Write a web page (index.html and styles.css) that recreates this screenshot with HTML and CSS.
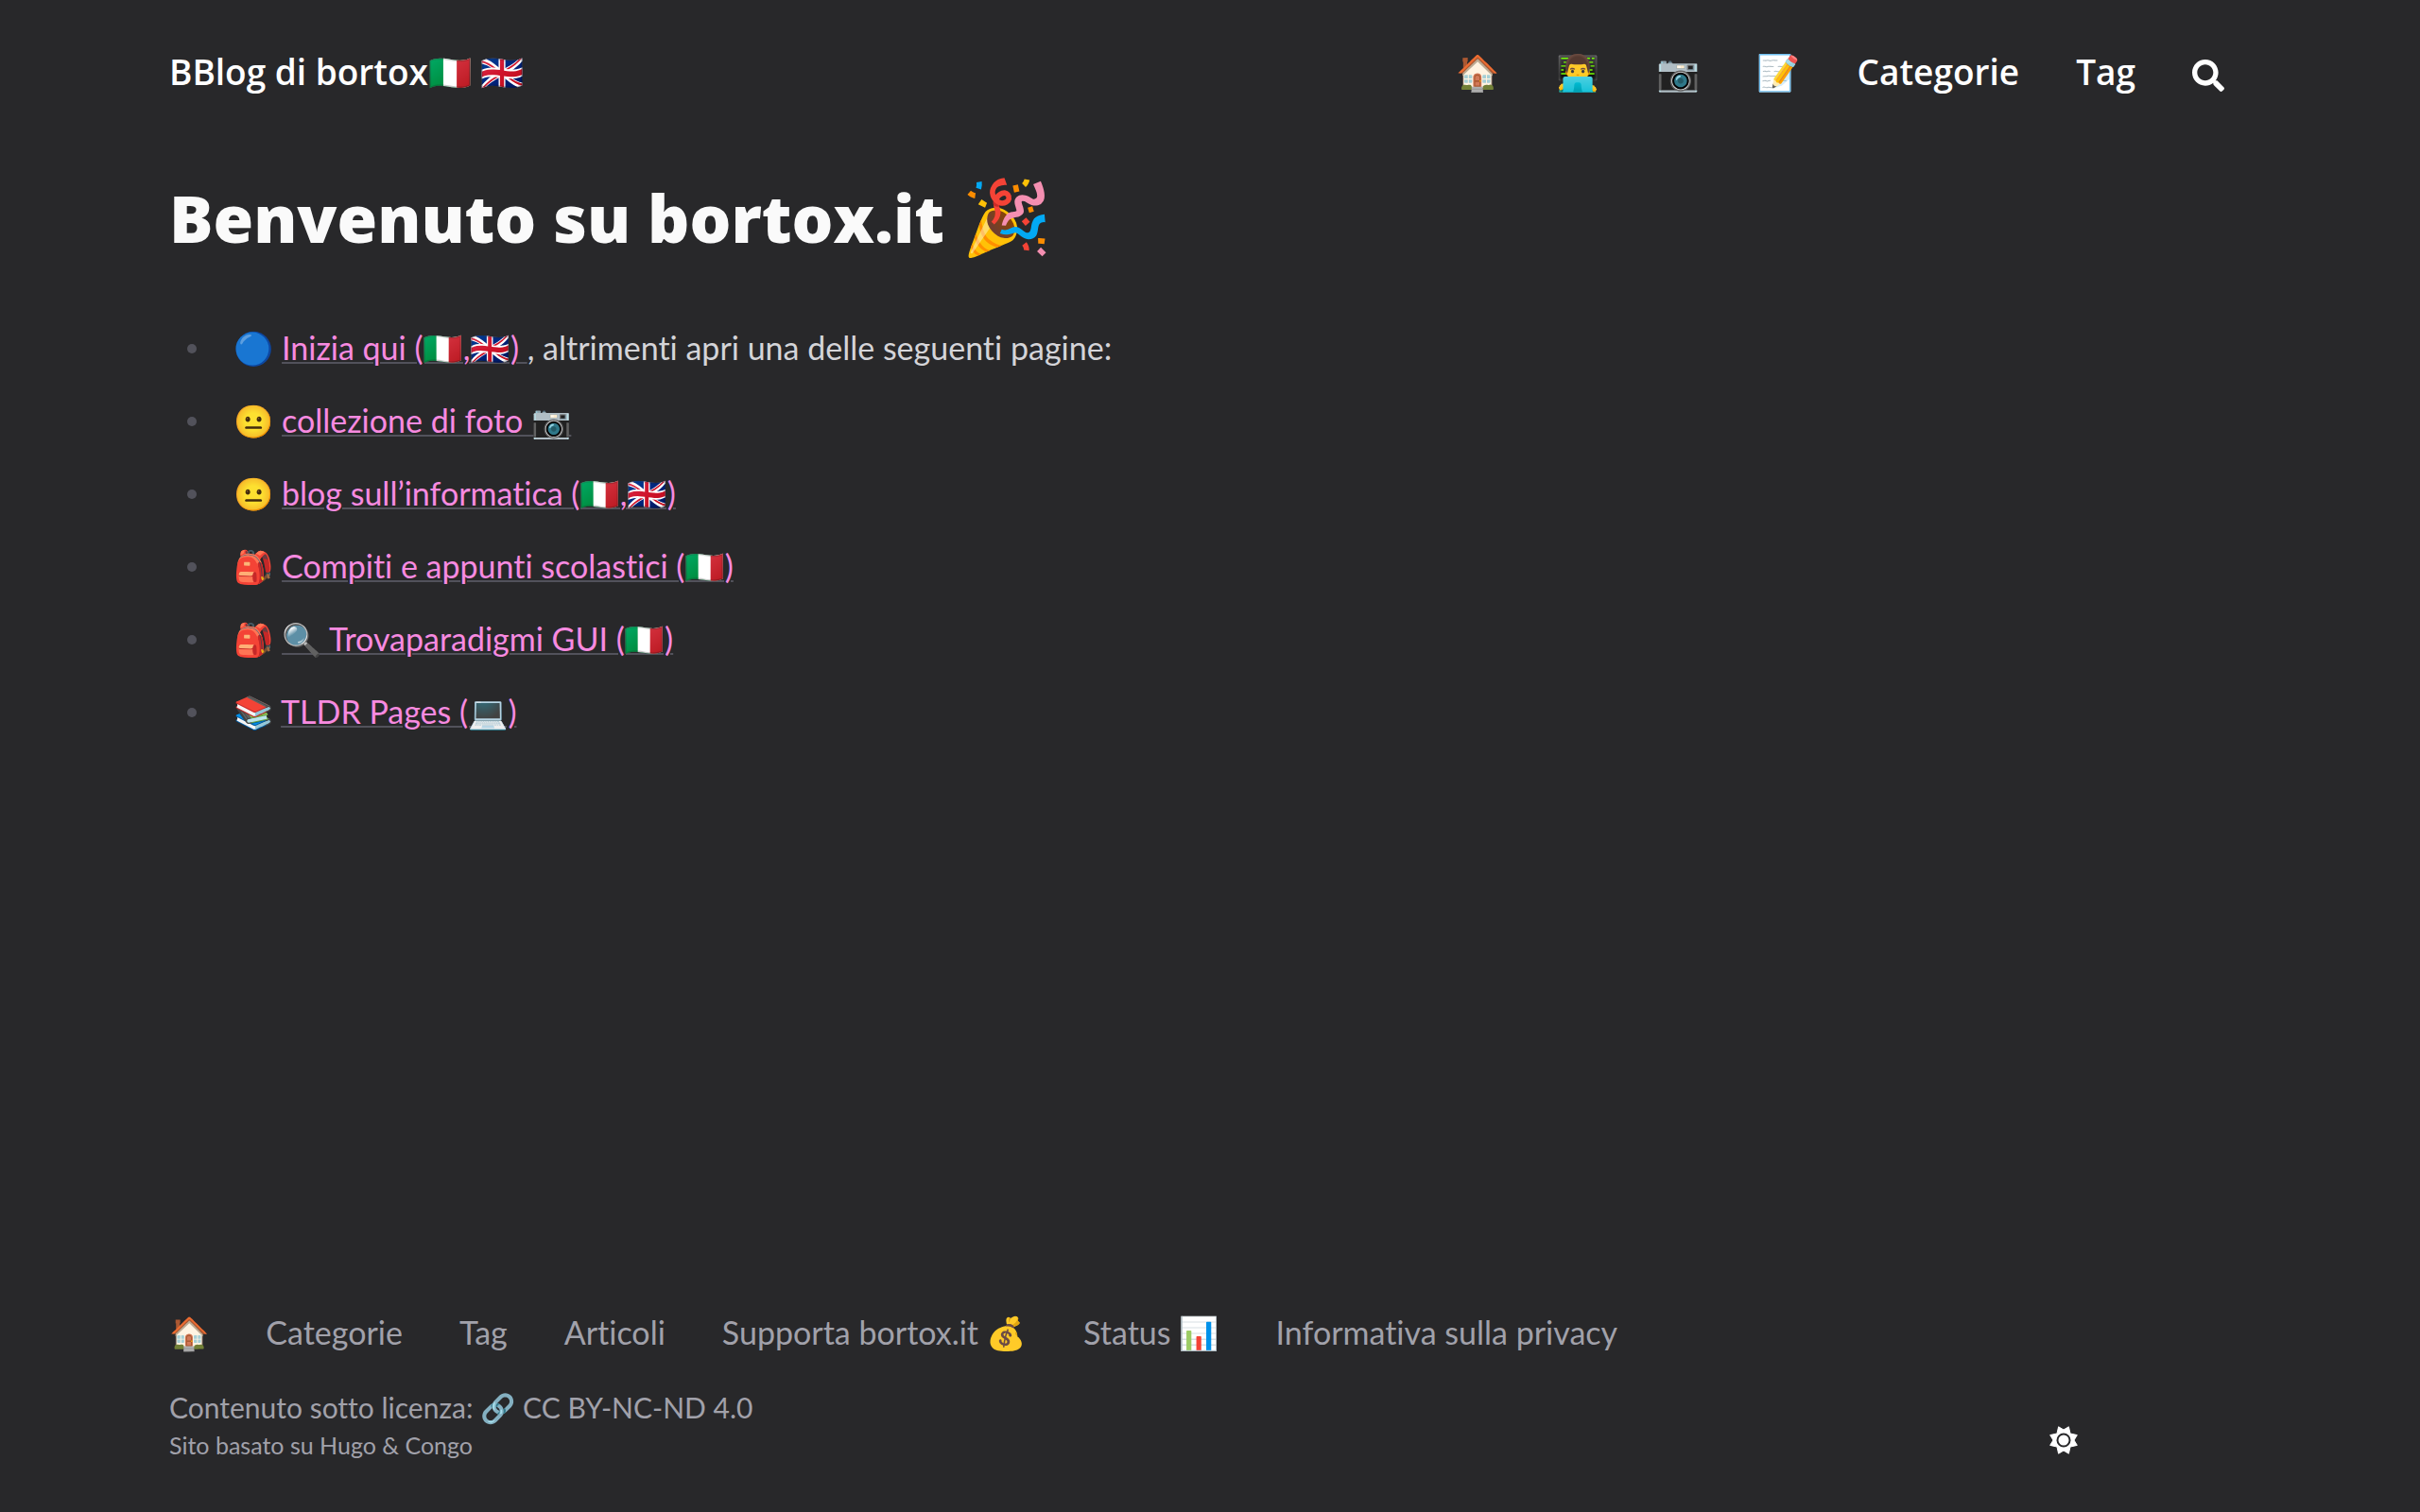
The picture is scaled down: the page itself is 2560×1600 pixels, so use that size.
FILE: index.html
```
<!DOCTYPE html>
<html lang="it">
<head>
<meta charset="utf-8">
<meta name="viewport" content="width=device-width, initial-scale=1">
<title>Blog di bortox</title>
<link rel="stylesheet" href="styles.css">
</head>
<body>
<header class="header">
  <a class="brand" href="#">BBlog di bortox🇮🇹 🇬🇧</a>
  <nav class="nav">
    <a href="#">🏠</a>
    <a href="#">👨‍💻</a>
    <a href="#">📷</a>
    <a href="#">📝</a>
    <a href="#">Categorie</a>
    <a href="#">Tag</a>
    <button class="icon-button" type="button" aria-label="Cerca"><svg class="icon" viewBox="0 0 512 512"><path fill="currentColor" d="M505 442.700L405.300 343c-4.500-4.500-10.600-7-17-7H372c27.600-35.300 44-79.700 44-128C416 93.100 322.900 0 208 0S0 93.100 0 208s93.100 208 208 208c48.300 0 92.700-16.400 128-44v16.300c0 6.400 2.500 12.500 7 17l99.700 99.700c9.400 9.400 24.600 9.400 33.900 0l28.300-28.300c9.400-9.400 9.400-24.600.1-34zM208 336c-70.700 0-128-57.200-128-128 0-70.700 57.200-128 128-128 70.700 0 128 57.200 128 128 0 70.700-57.200 128-128 128z"/></svg></button>
  </nav>
</header>
<main class="main">
  <h1 class="title">Benvenuto su bortox.it <span class="title-emoji">🎉</span></h1>
  <ul class="links">
    <li>🔵 <a href="#">Inizia qui (🇮🇹,🇬🇧) </a>, altrimenti apri una delle seguenti pagine:</li>
    <li>😐 <a href="#">collezione di foto 📷</a></li>
    <li>😐 <a href="#">blog sull’informatica (🇮🇹,🇬🇧)</a></li>
    <li>🎒 <a href="#">Compiti e appunti scolastici (🇮🇹)</a></li>
    <li>🎒 <a href="#">🔍 Trovaparadigmi GUI (🇮🇹)</a></li>
    <li>📚 <a href="#">TLDR Pages (💻)</a></li>
  </ul>
</main>
<footer class="footer">
  <nav class="footer-nav">
    <a href="#">🏠</a>
    <a href="#">Categorie</a>
    <a href="#">Tag</a>
    <a href="#">Articoli</a>
    <a href="#">Supporta bortox.it 💰</a>
    <a href="#">Status 📊</a>
    <a href="#">Informativa sulla privacy</a>
  </nav>
  <div class="footer-row">
    <div>
      <p class="license">Contenuto sotto licenza: <a href="#">🔗 CC BY-NC-ND 4.0</a></p>
      <p class="credits">Sito basato su <a href="#">Hugo</a> &amp; <a href="#">Congo</a></p>
    </div>
    <button class="icon-button theme" type="button" aria-label="Cambia tema"><svg class="sun" viewBox="0 0 30 30"><path fill="currentColor" stroke="currentColor" stroke-width="1" stroke-linejoin="round" d="M9.600 .8 L15 4 L20.400 .8 L22 8 L29.300 9.600 L26 15 L29.300 20.400 L22 22 L20.400 29.200 L15 26 L9.600 29.200 L8 22 L.7 20.400 L4 15 L.7 9.600 L8 8Z"/><circle class="sun-ring" cx="15" cy="15" r="6.500"/></svg></button>
  </div>
</footer>
</body>
</html>
```
FILE: styles.css
```
* { box-sizing: border-box; }
body {
  margin: 0;
  min-height: 100vh;
  display: flex;
  flex-direction: column;
  padding: 52px 179px 51px;
  background: #28282a;
  color: #d4d4d8;
  font: 34px/60px Lato, "Noto Color Emoji", sans-serif;
  font-variant-ligatures: none;
}
a { color: inherit; text-decoration: none; }
p { margin: 0; }
.header, .nav, .footer-nav, .footer-row { display: flex; flex-wrap: wrap; }
.header {
  justify-content: space-between;
  padding-right: 28px;
  color: #fff;
  font: 600 37px/48px "Open Sans", "Noto Color Emoji", sans-serif;
}
.nav, .footer-nav { column-gap: 60px; }
.icon-button { display: flex; background: none; border: 0; padding: 0; color: #fff; cursor: pointer; }
.nav .icon-button { padding-top: 11px; }
.icon { width: 34px; height: 34px; }
.main { flex: 1; }
.title {
  margin: 82px 0 60px;
  font-family: "Open Sans", "Noto Color Emoji", sans-serif;
  font-size: 69px;
  font-weight: 800;
  line-height: 96px;
  color: #fafafa;
}
.title-emoji { font-size: 77px; line-height: 1; }
.links { margin: 0; padding: 0; list-style: none; }
.links li { display: block; margin-bottom: 17px; }
.links li::before {
  content: "";
  display: inline-block;
  width: 10px;
  height: 10px;
  margin: 0 39px 7px 19px;
  border-radius: 50%;
  background: #52525b;
}
.links a {
  color: #f78ae0;
  text-decoration: underline #52525b 2px;
  text-underline-offset: 2px;
}
.footer { color: #a1a1aa; }
.footer-nav { margin-bottom: 35px; line-height: 48px; }
.footer-row { justify-content: space-between; align-items: flex-end; padding-right: 183px; }
.license { font-size: 30px; line-height: 40px; }
.credits { font-size: 25px; line-height: 40px; }
.theme { padding-bottom: 10px; }
.sun { width: 30px; height: 30px; }
.sun-ring { fill: none; stroke: #28282a; stroke-width: 2; }
```
